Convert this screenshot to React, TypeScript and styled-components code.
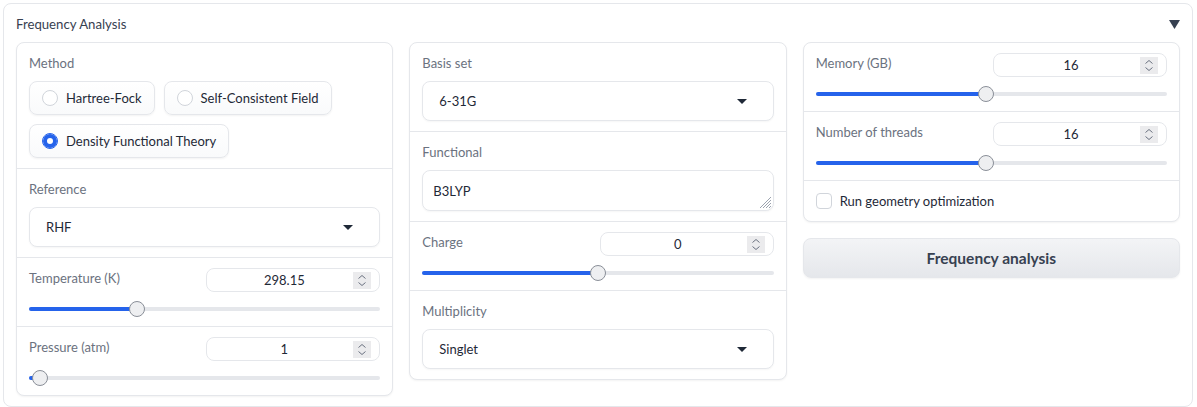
import React from "react";
import styled, { createGlobalStyle, css } from "styled-components";

const GlobalStyle = createGlobalStyle`
  body {
    margin: 0;
    background: #ffffff;
    font-family: Lato, "Liberation Sans", sans-serif;
    -webkit-font-smoothing: antialiased;
  }
`;

const Page = styled.div`
  padding: 3px 4px 1px 3px;
`;

const Accordion = styled.section`
  border: 1px solid #e5e7eb;
  border-radius: 8px;
  padding: 10px 12px 10px;
  background: #ffffff;
`;

const AccordionHeader = styled.div`
  display: flex;
  align-items: center;
  justify-content: space-between;
  height: 20px;
  margin-bottom: 8px;
  font-size: 13.2px;
  color: #374151;
`;

const Columns = styled.div`
  display: grid;
  grid-template-columns: repeat(3, 1fr);
  gap: 16px;
  align-items: start;
`;

const Column = styled.div`
  display: flex;
  flex-direction: column;
  gap: 16px;
`;

const Card = styled.div`
  display: flex;
  flex-direction: column;
  border: 1px solid #e5e7eb;
  border-radius: 8px;
  background: #ffffff;
  box-shadow: 0 1px 2px rgba(0, 0, 0, 0.05);
  overflow: hidden;
`;

const Section = styled.div`
  padding: 10px 12px;
  & + & {
    border-top: 1px solid #e5e7eb;
  }
`;

const SliderSection = styled(Section)`
  padding: 10px 12px 9px;
`;

const Label = styled.div`
  font-size: 13px;
  line-height: 20px;
  color: #6b7280;
`;

const BlockLabel = styled(Label)`
  margin-bottom: 8px;
`;

const RadioGroup = styled.div`
  display: flex;
  flex-wrap: wrap;
  gap: 9px 9px;
`;

const RadioItem = styled.label`
  display: inline-flex;
  align-items: center;
  gap: 8px;
  height: 34px;
  box-sizing: border-box;
  padding: 0 12px;
  border: 1px solid #e5e7eb;
  border-radius: 8px;
  background: linear-gradient(to bottom, #ffffff, #f9fafb);
  box-shadow: 0 1px 2px rgba(0, 0, 0, 0.05);
  font-size: 13px;
  color: #1f2937;
`;

const RadioDot = styled.span<{ $checked?: boolean }>`
  width: 16px;
  height: 16px;
  box-sizing: border-box;
  border-radius: 50%;
  background: #ffffff;
  ${(p) =>
    p.$checked
      ? css`
          border: 1px solid #2563eb;
          box-shadow: inset 0 0 0 4px #2563eb;
        `
      : css`
          border: 1px solid #d1d5db;
        `}
`;

const Dropdown = styled.div`
  display: flex;
  align-items: center;
  justify-content: space-between;
  height: 40px;
  box-sizing: border-box;
  padding: 0 26px 0 16px;
  border: 1px solid #e5e7eb;
  border-radius: 8px;
  background: #ffffff;
  box-shadow: 0 1px 2px rgba(0, 0, 0, 0.04);
  font-size: 13px;
  color: #1f2937;
`;

const TextBox = styled.div`
  position: relative;
  display: flex;
  align-items: center;
  height: 41px;
  box-sizing: border-box;
  padding: 0 10px;
  border: 1px solid #e5e7eb;
  border-radius: 8px;
  background: #ffffff;
  box-shadow: 0 1px 2px rgba(0, 0, 0, 0.04);
  font-size: 13px;
  color: #1f2937;
`;

const ResizeHandle = styled.svg`
  position: absolute;
  right: 1px;
  bottom: 1px;
`;

const SliderHeader = styled.div`
  display: flex;
  align-items: flex-start;
  justify-content: space-between;
  height: 24px;
`;

const NumberBox = styled.div`
  display: flex;
  align-items: center;
  width: 174px;
  height: 24px;
  box-sizing: border-box;
  padding: 0 8px;
  border: 1px solid #e5e7eb;
  border-radius: 8px;
  background: #ffffff;
  font-size: 13px;
  color: #1f2937;
`;

const NumberValue = styled.span`
  flex: 1;
  text-align: center;
`;

const Spinner = styled.span`
  display: flex;
  align-items: center;
  justify-content: center;
  width: 18px;
  height: 17px;
  background: #ebebed;
`;

const SliderTrack = styled.div`
  position: relative;
  height: 16px;
  box-sizing: border-box;
  padding-top: 6px;
  margin-top: 9px;
`;

const Rail = styled.div`
  height: 4px;
  border-radius: 2px;
  background: #e5e7eb;
`;

const RailFill = styled.div`
  position: absolute;
  left: 0;
  top: 6px;
  height: 4px;
  border-radius: 2px;
  background: #2563eb;
`;

const Thumb = styled.div`
  position: absolute;
  top: 0;
  width: 16px;
  height: 16px;
  box-sizing: border-box;
  border-radius: 50%;
  border: 1px solid #8a8f98;
  background: #eeeff1;
`;

const CheckRow = styled.label`
  display: flex;
  align-items: center;
  gap: 8px;
  height: 20px;
  font-size: 13px;
  color: #1f2937;
`;

const CheckBox = styled.span`
  width: 16px;
  height: 16px;
  box-sizing: border-box;
  border: 1px solid #d1d5db;
  border-radius: 4px;
  background: #ffffff;
`;

const PrimaryButton = styled.button`
  height: 40px;
  border: 1px solid #e5e7eb;
  border-radius: 8px;
  background: linear-gradient(to bottom, #f3f4f6, #e5e7eb);
  box-shadow: 0 1px 2px rgba(0, 0, 0, 0.05);
  font-family: inherit;
  font-size: 15.5px;
  font-weight: 700;
  color: #374151;
  cursor: pointer;
`;

const Caret = () => (
  <svg width="10" height="5" viewBox="0 0 10 5">
    <polygon points="0,0 10,0 5,5" fill="#1f2937" />
  </svg>
);

const SpinIcon = () => (
  <svg width="10" height="13" viewBox="0 0 10 13">
    <polyline points="1.5,4.5 5,1.5 8.5,4.5" fill="none" stroke="#6b7280" strokeWidth="1" />
    <polyline points="1.5,8.5 5,11.5 8.5,8.5" fill="none" stroke="#6b7280" strokeWidth="1" />
  </svg>
);

type SliderProps = {
  label: string;
  value: number;
  min: number;
  max: number;
  display?: string;
};

const Slider = ({ label, value, min, max, display }: SliderProps) => {
  const f = (value - min) / (max - min);
  return (
    <SliderSection>
      <SliderHeader>
        <Label>{label}</Label>
        <NumberBox>
          <NumberValue>{display ?? value}</NumberValue>
          <Spinner>
            <SpinIcon />
          </Spinner>
        </NumberBox>
      </SliderHeader>
      <SliderTrack>
        <Rail />
        <RailFill style={{ width: `calc(${f} * (100% - 16px) + 8px)` }} />
        <Thumb style={{ left: `calc(${f} * (100% - 16px))` }} />
      </SliderTrack>
    </SliderSection>
  );
};

const Select = ({ label, value }: { label: string; value: string }) => (
  <Section>
    <BlockLabel>{label}</BlockLabel>
    <Dropdown>
      <span>{value}</span>
      <Caret />
    </Dropdown>
  </Section>
);

export default function App() {
  return (
    <Page>
      <GlobalStyle />
      <Accordion>
        <AccordionHeader>
          <span>Frequency Analysis</span>
          <svg width="11" height="9" viewBox="0 0 11 9">
            <polygon points="0,0 11,0 5.5,9" fill="#374151" />
          </svg>
        </AccordionHeader>
        <Columns>
          <Column>
            <Card>
              <Section>
                <BlockLabel>Method</BlockLabel>
                <RadioGroup>
                  <RadioItem>
                    <RadioDot />
                    Hartree-Fock
                  </RadioItem>
                  <RadioItem>
                    <RadioDot />
                    Self-Consistent Field
                  </RadioItem>
                  <RadioItem>
                    <RadioDot $checked />
                    Density Functional Theory
                  </RadioItem>
                </RadioGroup>
              </Section>
              <Select label="Reference" value="RHF" />
              <Slider label="Temperature (K)" value={298.15} min={0} max={1000} display="298.15" />
              <Slider label="Pressure (atm)" value={1} min={0} max={100} />
            </Card>
          </Column>
          <Column>
            <Card>
              <Select label="Basis set" value="6-31G" />
              <Section>
                <BlockLabel>Functional</BlockLabel>
                <TextBox>
                  B3LYP
                  <ResizeHandle width="13" height="13" viewBox="0 0 13 13">
                    <g stroke="#9ca3af" strokeWidth="1">
                      <line x1="12" y1="1" x2="1" y2="12" />
                      <line x1="12" y1="4" x2="4" y2="12" />
                      <line x1="12" y1="7" x2="7" y2="12" />
                      <line x1="12" y1="10" x2="10" y2="12" />
                    </g>
                  </ResizeHandle>
                </TextBox>
              </Section>
              <Slider label="Charge" value={0} min={-10} max={10} />
              <Select label="Multiplicity" value="Singlet" />
            </Card>
          </Column>
          <Column>
            <Card>
              <Slider label="Memory (GB)" value={16} min={1} max={32} />
              <Slider label="Number of threads" value={16} min={1} max={32} />
              <Section>
                <CheckRow>
                  <CheckBox />
                  Run geometry optimization
                </CheckRow>
              </Section>
            </Card>
            <PrimaryButton>Frequency analysis</PrimaryButton>
          </Column>
        </Columns>
      </Accordion>
    </Page>
  );
}
